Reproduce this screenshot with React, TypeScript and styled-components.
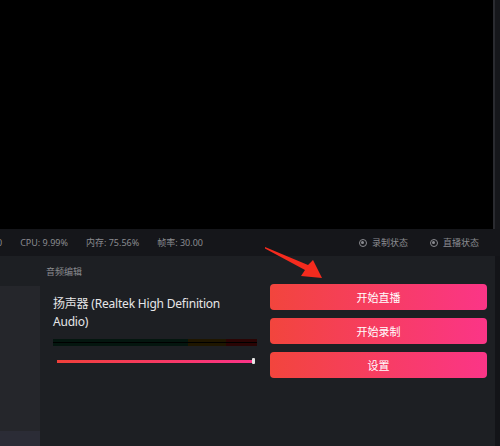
import styled, { createGlobalStyle } from "styled-components";

const Global = createGlobalStyle`
    html, body {
        margin: 0;
        padding: 0;
        background: #000;
        overflow: hidden;
    }
    * {
        box-sizing: border-box;
    }
`;

const Page = styled.div`
    position: relative;
    width: 500px;
    height: 446px;
    display: flex;
    flex-direction: column;
    font-family: "Noto Sans", "Noto Sans CJK SC", sans-serif;
    overflow: hidden;
`;

const Top = styled.div`
    height: 229px;
    display: flex;
`;

const Preview = styled.div`
    flex: 1;
    background: #000;
`;

const ScrollStrip = styled.div`
    width: 7px;
    background: #16171b;
    border-left: 2px solid #2a2b30;
`;

const StatusBar = styled.div`
    height: 27px;
    background: #15161a;
    display: flex;
    align-items: center;
    gap: 18px;
    font-size: 9px;
    color: #8a8b90;
    white-space: nowrap;
`;

const Stat = styled.span<{ $cut?: boolean }>`
    margin-left: ${p => (p.$cut ? "-3px" : "0")};
`;

const Spacer = styled.div`
    flex: 1;
`;

const State = styled.span<{ $last?: boolean }>`
    display: flex;
    align-items: center;
    gap: 5px;
    margin-right: ${p => (p.$last ? "21px" : "4px")};
`;

const Dot = styled.span`
    width: 8px;
    height: 8px;
    border: 1px solid #8a8b90;
    border-radius: 50%;
    display: flex;
    align-items: center;
    justify-content: center;
    &::after {
        content: "";
        width: 3px;
        height: 3px;
        border-radius: 50%;
        background: #8a8b90;
    }
`;

const Bottom = styled.div`
    flex: 1;
    display: flex;
`;

const Left = styled.div`
    width: 40px;
    display: flex;
    flex-direction: column;
`;

const LeftBlock = styled.div<{ $h?: string; $bg: string }>`
    height: ${p => p.$h || "auto"};
    flex: ${p => (p.$h ? "none" : "1")};
    background: ${p => p.$bg};
`;

const Main = styled.div`
    flex: 1;
    background: #1d1f23;
    display: flex;
    flex-direction: column;
`;

const Title = styled.div`
    height: 28px;
    padding: 9px 0 0 6px;
    font-size: 9px;
    color: #8b8c90;
`;

const Content = styled.div`
    display: flex;
    align-items: flex-start;
`;

const Audio = styled.div`
    width: 204px;
    margin-left: 13px;
    padding-top: 11px;
`;

const AudioName = styled.div`
    max-width: 195px;
    font-size: 12px;
    letter-spacing: -0.2px;
    line-height: 18px;
    color: #e6e6e8;
`;

const Meter = styled.div`
    margin-top: 8px;
    height: 7px;
    position: relative;
    display: flex;
`;

const MeterPart = styled.div<{ $w: number; $bg: string }>`
    width: ${p => p.$w}px;
    background: ${p => p.$bg};
`;

const MeterLine = styled.div`
    position: absolute;
    left: 0;
    right: 0;
    top: 3px;
    height: 1px;
    background: #000;
`;

const Slider = styled.div`
    margin: 14px 3px 0 4px;
    height: 3px;
    background: linear-gradient(to right, #f0403a, #fb3388);
    position: relative;
`;

const Thumb = styled.div`
    position: absolute;
    right: -1px;
    top: -2px;
    width: 3px;
    height: 6px;
    background: #e4e4e4;
    border-radius: 1px;
`;

const Buttons = styled.div`
    width: 217px;
    margin-left: 13px;
    display: flex;
    flex-direction: column;
    gap: 8px;
`;

const Button = styled.button`
    height: 26px;
    border: none;
    border-radius: 4px;
    background: linear-gradient(to right, #f2453d, #fb3587);
    color: #fff;
    font-family: inherit;
    font-size: 11px;
    cursor: pointer;
`;

const RightStrip = styled.div`
    width: 5px;
    background: #131418;
`;

const Arrow = styled.svg`
    position: absolute;
    left: 0;
    top: 0;
    pointer-events: none;
`;

export default function App() {
    return (
        <Page>
            <Global />
            <Top>
                <Preview />
                <ScrollStrip />
            </Top>
            <StatusBar>
                <Stat $cut>0</Stat>
                <Stat>CPU: 9.99%</Stat>
                <Stat>内存: 75.56%</Stat>
                <Stat>帧率: 30.00</Stat>
                <Spacer />
                <State><Dot />录制状态</State>
                <State $last><Dot />直播状态</State>
            </StatusBar>
            <Bottom>
                <Left>
                    <LeftBlock $h="30px" $bg="#1d1f23" />
                    <LeftBlock $bg="#25262b" />
                    <LeftBlock $h="15px" $bg="#2b2c36" />
                </Left>
                <Main>
                    <Title>音频编辑</Title>
                    <Content>
                        <Audio>
                            <AudioName>扬声器 (Realtek High Definition Audio)</AudioName>
                            <Meter>
                                <MeterPart $w={135} $bg="#04160f" />
                                <MeterPart $w={38} $bg="#1f1600" />
                                <MeterPart $w={31} $bg="#2a0404" />
                                <MeterLine />
                            </Meter>
                            <Slider><Thumb /></Slider>
                        </Audio>
                        <Buttons>
                            <Button>开始直播</Button>
                            <Button>开始录制</Button>
                            <Button>设置</Button>
                        </Buttons>
                    </Content>
                </Main>
                <RightStrip />
            </Bottom>
            <Arrow width="500" height="446" viewBox="0 0 500 446">
                <polygon points="265,247 308,265 313,260 322,278 301,276 305,270 265,248.5" fill="#f52b1e" />
            </Arrow>
        </Page>
    );
}
